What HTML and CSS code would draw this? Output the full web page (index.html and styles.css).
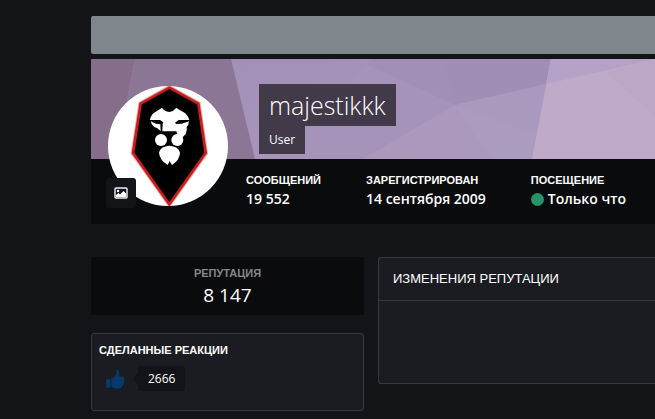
FILE: index.html
```html
<!DOCTYPE html>
<html lang="ru">
<head>
<meta charset="utf-8">
<title>majestikkk</title>
<link rel="stylesheet" href="styles.css">
</head>
<body>
<div class="page">
  <div class="topbar"></div>
  <header class="profile">
    <div class="cover">
      <svg class="cover-art" viewBox="0 0 564 100" preserveAspectRatio="xMinYMin slice" aria-hidden="true">
        <defs>
          <linearGradient id="mid" x1="0" y1="0" x2="1" y2="1"><stop offset="0" stop-color="#a28fb8"/><stop offset="1" stop-color="#ab97bb"/></linearGradient>
          <linearGradient id="low" x1="0" y1="0" x2="1" y2="0"><stop offset="0" stop-color="#ad98bb"/><stop offset="1" stop-color="#aa99be"/></linearGradient>
        </defs>
        <rect width="564" height="100" fill="url(#mid)"/>
        <path d="M0 0H44L36 42L26 100H0Z" fill="#866d89"/>
        <path d="M44 0H140L164 100H26L36 42Z" fill="#8c7695"/>
        <path d="M264 0L364 46L354 0Z" fill="#a28fb6"/>
        <path d="M354 0L364 46L455 25L460 0Z" fill="#a08eb5"/>
        <path d="M264 0L364 46L272 100H190L280 0Z" fill="#a693ba"/>
        <path d="M364 46L455 25L441 100H272Z" fill="url(#low)"/>
        <path d="M364 46L445 75L441 100H400Z" fill="#ab9bbe"/>
        <path d="M460 0H564V100H441Z" fill="#bfabc9"/>
        <path d="M460 0H564L455 25Z" fill="#b5a2c6"/>
        <path d="M564 0V57L515 13Z" fill="#bda7c7"/>
      </svg>
      <div class="identity">
        <h1 class="name">majestikkk</h1>
        <span class="role">User</span>
      </div>
    </div>
    <dl class="stats">
      <div><dt>СООБЩЕНИЙ</dt><dd>19 552</dd></div>
      <div><dt>ЗАРЕГИСТРИРОВАН</dt><dd>14 сентября 2009</dd></div>
      <div><dt>ПОСЕЩЕНИЕ</dt><dd><span class="online"></span>Только что</dd></div>
    </dl>
    <div class="avatar">
      <svg class="avatar-art" viewBox="54 108 360 360" role="img" aria-label="majestikkk">
        <circle cx="234" cy="288" r="180" fill="#fff"/>
        <path d="M238 110L327 160L349 310L238 466L127 310L150 160Z" fill="#000" stroke="#e9a9a9" stroke-width="10"/>
        <path d="M238 113L325 161L347 309L238 463L129 309L152 161Z" fill="#000" stroke="#c91c1c" stroke-width="8"/>
        <g fill="#fff">
          <path d="M179 210Q184 192 196 186Q206 180 216 173Q222 183 238 186Q252 183 259 173Q268 180 280 186Q292 192 298 210H266L255 218L259 222L275 221L297 214Q296 226 290 231Q292 240 287 252Q282 258 276 263L262 252L259 244H217L218 222L220 217L210 210Z"/>
          <path d="M182 214L198 221L211 223L212 243L201 234Q187 232 182 214Z"/>
          <circle cx="213" cy="270" r="18"/>
          <circle cx="262" cy="270" r="18"/>
          <path d="M207 308Q211 289 238 287Q266 289 270 308Q269 330 246 345L239 333L233 345Q209 330 207 308Z"/>
        </g>
        <path d="M218 246H259L248 257L240 266V284H236V266L226 257Z" fill="#000"/>
      </svg>
      <button class="photo" type="button" aria-label="Изменить фото">
        <svg viewBox="0 0 14 12" aria-hidden="true"><rect x="1" y="1" width="12" height="10" rx="1" fill="none" stroke="#eef2f6" stroke-width="1.4"/><circle cx="4" cy="4" r="1.2" fill="#fff"/><path d="M2 10V8L4.500 6L6 7.500L9.500 4L12 6.500V10Z" fill="#fff"/></svg>
      </button>
    </div>
  </header>
  <main class="columns">
    <div class="side">
      <section class="reputation">
        <h2 class="label">РЕПУТАЦИЯ</h2>
        <p class="score">8 147</p>
      </section>
      <section class="card reactions">
        <h2 class="label">СДЕЛАННЫЕ РЕАКЦИИ</h2>
        <div class="reaction">
          <svg class="thumb" viewBox="0 0 20 20" aria-hidden="true"><path d="M1 10.500Q3 9.500 5.200 10.300L5.700 18.300Q3.500 19.500 1.400 18.400Z"/><path d="M6.200 10.200Q10.500 8 11.300 4.500L11.500 1Q13.500 0 14.200 2.500Q14.700 4.500 13.400 7.700H18Q19.700 8 19.300 9.700Q19.800 11 18.900 12.300Q19.300 13.900 18.200 15Q18.400 16.600 17 17.500Q16.800 19.300 14.500 19.500Q10 19.700 6.500 18Z"/></svg>
          <span class="count">2666</span>
        </div>
      </section>
    </div>
    <section class="card history">
      <h2 class="history-title">ИЗМЕНЕНИЯ РЕПУТАЦИИ</h2>
      <div class="history-body"></div>
    </section>
  </main>
</div>
</body>
</html>
```
FILE: styles.css
```css
* { box-sizing: border-box; }
body, h1, h2, p, dl, dd { margin: 0; }
body {
  background: #131418;
  color: #fff;
  font-family: "Open Sans", "Noto Sans", sans-serif;
  font-size: 13px;
}
.page { padding: 16px 0 8px 91px; }
.topbar { height: 38px; margin-bottom: 5px; background: #7f868c; border-radius: 2px 0 0 2px; }
.profile { position: relative; background: #090b0c; }
.cover { position: relative; height: 100px; padding: 25px 0 0 168px; background: #a592b9; }
.cover-art { position: absolute; inset: 0; width: 100%; height: 100%; }
.identity { position: relative; display: flex; flex-direction: column; align-items: flex-start; }
.name, .role { background: #423a49; padding: 0 10px; }
.name { font-size: 25px; font-weight: 300; line-height: 42px; }
.role { font-size: 12px; line-height: 28px; }
.stats { display: flex; gap: 45px; padding: 13px 0 15px 155px; white-space: nowrap; }
.stats dt, .label {
  font: bold 11px/16px "Liberation Sans", Arial, sans-serif;
}
.stats dd { font-size: 14px; font-weight: 600; line-height: 21px; }
.online {
  display: inline-block;
  width: 13px;
  height: 13px;
  margin-right: 4px;
  border-radius: 50%;
  background: #26936a;
  vertical-align: -2px;
}
.avatar { position: absolute; left: 17px; top: 27px; width: 120px; height: 120px; }
.avatar-art { display: block; width: 100%; }
.photo {
  position: absolute;
  left: -2px;
  bottom: -2px;
  display: grid;
  place-items: center;
  width: 30px;
  height: 30px;
  padding: 0;
  border: 0;
  border-radius: 3px;
  background: #131418;
}
.photo svg { width: 14px; height: 12px; }
.columns { display: flex; align-items: flex-start; gap: 14px; margin-top: 33px; }
.side { flex: 0 0 273px; display: grid; gap: 18px; }
.reputation { padding: 8px 0 6px; border-radius: 2px; background: #090b0c; text-align: center; }
.reputation .label { color: #858789; }
.score { font-size: 19px; line-height: 28px; }
.card { border: 1px solid #38393f; border-radius: 3px; background: #1b1c21; }
.reactions { padding: 8px 7px 19px; }
.reaction { display: flex; align-items: center; gap: 13px; margin-top: 8px; padding-left: 6px; }
.thumb { width: 20px; height: 20px; fill: #07396d; }
.count {
  position: relative;
  padding: 0 10px;
  border-radius: 3px;
  background: #131418;
  font-size: 12px;
  line-height: 25px;
}
.count::before {
  content: "";
  position: absolute;
  left: -5px;
  top: 7px;
  border: solid transparent;
  border-width: 6px 5px 6px 0;
  border-right-color: #131418;
}
.history { flex: 1; border-right: 0; border-radius: 3px 0 0 3px; }
.history-title {
  padding: 0 14px;
  border-bottom: 1px solid #38393f;
  font: 13px/42px "Liberation Sans", Arial, sans-serif;
}
.history-body { min-height: 82px; }
```
